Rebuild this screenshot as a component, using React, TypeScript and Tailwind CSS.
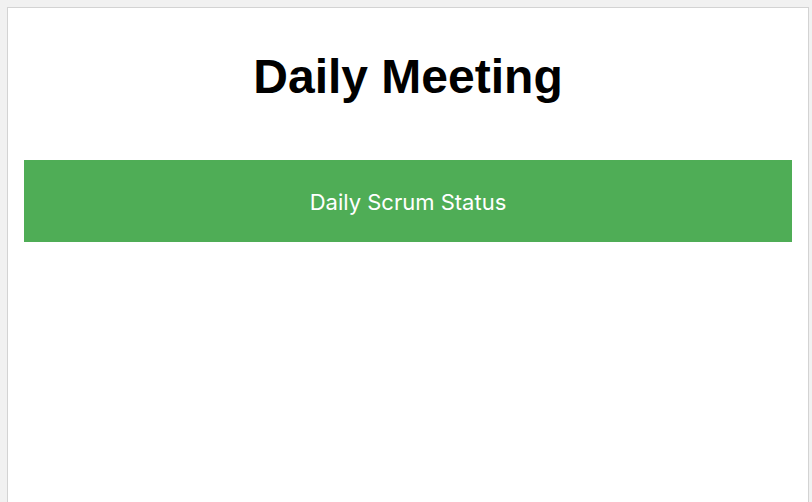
export default function App() {
  return (
    <div className="h-screen overflow-hidden bg-[#f1f1f1] pl-[7px] pt-[7px]">
      {/* page panel */}
      <div className="h-[560px] w-[802px] border border-[#d3d3d3] bg-white px-4 pt-[41px]">
        <h1 className="text-center font-['Liberation_Sans',Arial,sans-serif] text-[48px] font-bold leading-[56px] text-black">
          Daily Meeting
        </h1>
        {/* status bar */}
        <div className="mt-[55px] flex h-[82px] items-center justify-center bg-[#4fad56] pt-[2px]">
          <span className="font-['Inter',sans-serif] text-[22px] leading-[28px] text-white">
            Daily Scrum Status
          </span>
        </div>
      </div>
    </div>
  );
}
